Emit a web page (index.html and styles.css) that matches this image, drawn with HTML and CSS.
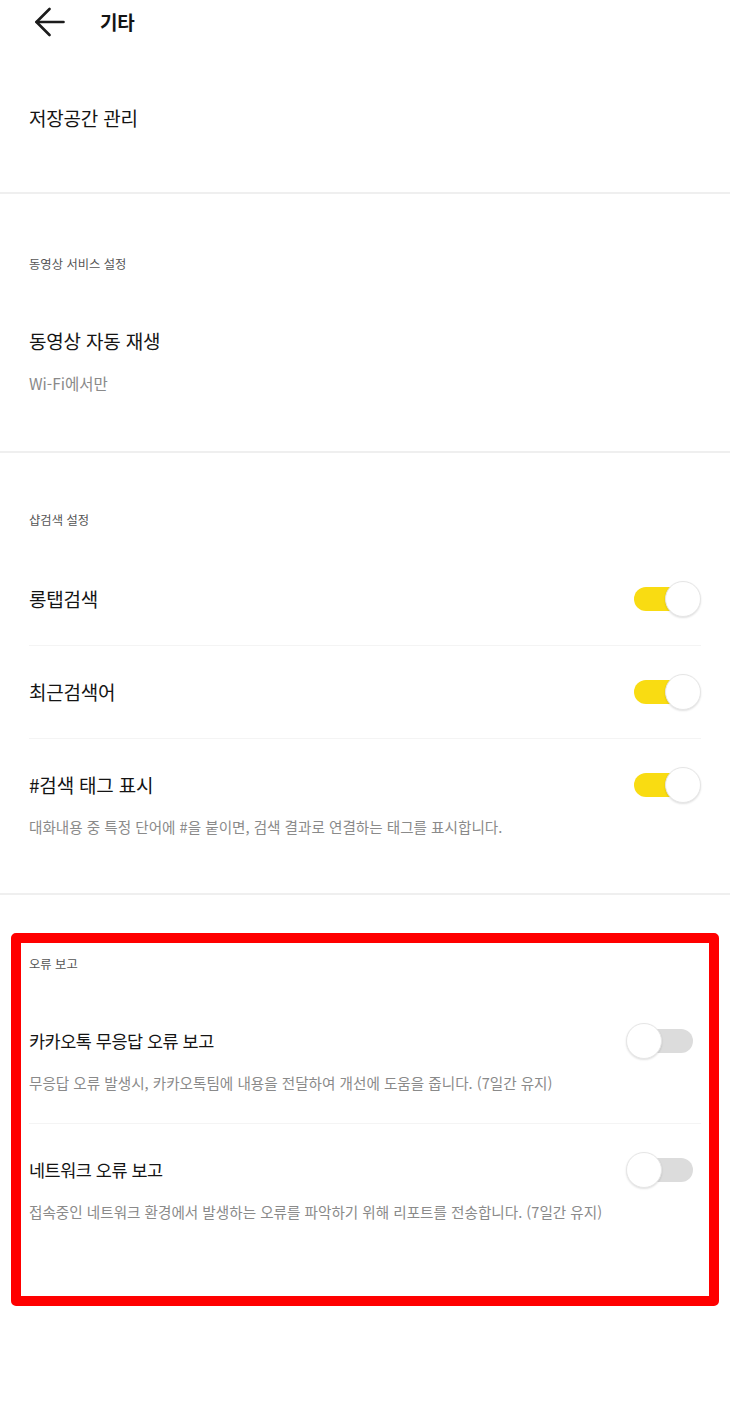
FILE: index.html
```html
<!DOCTYPE html>
<html lang="ko">
<head>
<meta charset="utf-8">
<title>기타</title>
<link rel="stylesheet" href="styles.css">
</head>
<body>
<div class="page">
  <header class="appbar">
    <svg class="back" width="30" height="30" viewBox="0 0 30 30" fill="none" stroke="#1c1c1c" stroke-width="2.6" stroke-linecap="round" stroke-linejoin="round">
      <path d="M1.5 15 H28.5"/>
      <path d="M14.5 2 L1.5 15 L14.5 28"/>
    </svg>
    <h1 class="appbar-title">기타</h1>
  </header>

  <section class="storage">
    <div class="title">저장공간 관리</div>
  </section>
  <div class="divider"></div>

  <section class="section video">
    <div class="label">동영상 서비스 설정</div>
    <div class="title video-title">동영상 자동 재생</div>
    <div class="sub">Wi-Fi에서만</div>
  </section>
  <div class="divider"></div>

  <section class="section search">
    <div class="label">샵검색 설정</div>
    <div class="row">
      <div class="row-main"><span class="title">롱탭검색</span><span class="toggle on"><span class="track"></span><span class="knob"></span></span></div>
    </div>
    <div class="row">
      <div class="row-main"><span class="title">최근검색어</span><span class="toggle on"><span class="track"></span><span class="knob"></span></span></div>
    </div>
    <div class="row last">
      <div class="row-main"><span class="title">#검색 태그 표시</span><span class="toggle on"><span class="track"></span><span class="knob"></span></span></div>
      <div class="desc">대화내용 중 특정 단어에 #을 붙이면, 검색 결과로 연결하는 태그를 표시합니다.</div>
    </div>
  </section>
  <div class="divider"></div>

  <section class="section error">
    <div class="label">오류 보고</div>
    <div class="row first-err">
      <div class="row-main"><span class="title">카카오톡 무응답 오류 보고</span><span class="toggle"><span class="track"></span><span class="knob"></span></span></div>
      <div class="desc">무응답 오류 발생시, 카카오톡팀에 내용을 전달하여 개선에 도움을 줍니다. (7일간 유지)</div>
    </div>
    <div class="row last">
      <div class="row-main"><span class="title">네트워크 오류 보고</span><span class="toggle"><span class="track"></span><span class="knob"></span></span></div>
      <div class="desc">접속중인 네트워크 환경에서 발생하는 오류를 파악하기 위해 리포트를 전송합니다. (7일간 유지)</div>
    </div>
  </section>

  <div class="highlight"></div>
</div>
</body>
</html>
```

FILE: styles.css
```css
* { box-sizing: border-box; }

html, body {
  margin: 0;
  padding: 0;
  background: #ffffff;
}

body {
  font-family: "Noto Sans CJK KR", "Noto Sans", sans-serif;
  color: #141414;
}

.page {
  position: relative;
  width: 730px;
  min-height: 1407px;
}

.appbar {
  height: 44px;
  display: flex;
  align-items: center;
  padding-left: 35px;
  gap: 35px;
}

.back { display: block; }

.appbar-title {
  margin: 0;
  font-size: 19px;
  font-weight: 700;
  line-height: 26px;
  color: #141414;
  letter-spacing: -0.3px;
}

.title {
  font-size: 19px;
  line-height: 28px;
  letter-spacing: -0.2px;
  color: #141414;
}

.error .title {
  font-size: 17.5px;
  letter-spacing: -0.5px;
}

.storage {
  height: 148px;
  display: flex;
  align-items: center;
  padding: 0 29px;
}

.divider {
  height: 2px;
  background: #efefef;
}

.section {
  padding: 0 29px;
}

.label {
  font-size: 12.3px;
  line-height: 20px;
  color: #555555;
}

.video { padding-top: 60px; padding-bottom: 58px; }
.video-title { margin-top: 53px; }
.sub {
  margin-top: 18px;
  font-size: 15.5px;
  line-height: 20px;
  color: #8a8a8a;
}

.search { padding-top: 57px; padding-bottom: 56px; }
.search .label { margin-bottom: 23px; }

.error { padding-top: 59px; padding-bottom: 40px; }
.error .label { margin-bottom: 21px; }

.row {
  padding: 32px 0;
  border-bottom: 1px solid #f4f4f4;
}

.row.last {
  border-bottom: none;
  padding-bottom: 0;
}

.row.first-err { padding-bottom: 30px; }

.row-main {
  height: 28px;
  display: flex;
  align-items: center;
  justify-content: space-between;
}

.desc {
  margin-top: 18px;
  font-size: 14.6px;
  line-height: 20px;
  color: #8a8a8a;
}

.toggle {
  position: relative;
  width: 75px;
  height: 36px;
  flex: none;
}

.track {
  position: absolute;
  left: 8px;
  top: 6px;
  width: 59px;
  height: 24px;
  border-radius: 12px;
  background: #dcdcdc;
}

.toggle.on .track { background: #f9dc12; }

.knob {
  position: absolute;
  top: 0;
  left: 0;
  width: 36px;
  height: 36px;
  border-radius: 50%;
  background: #ffffff;
  border: 1px solid #e6e6e6;
  box-shadow: 0 1px 2px rgba(0, 0, 0, 0.12);
}

.toggle.on .knob { left: 39px; }

.highlight {
  position: absolute;
  left: 11px;
  top: 933px;
  width: 708px;
  height: 373px;
  border: 10.5px solid #ff0000;
  border-radius: 5px;
  pointer-events: none;
}
```
